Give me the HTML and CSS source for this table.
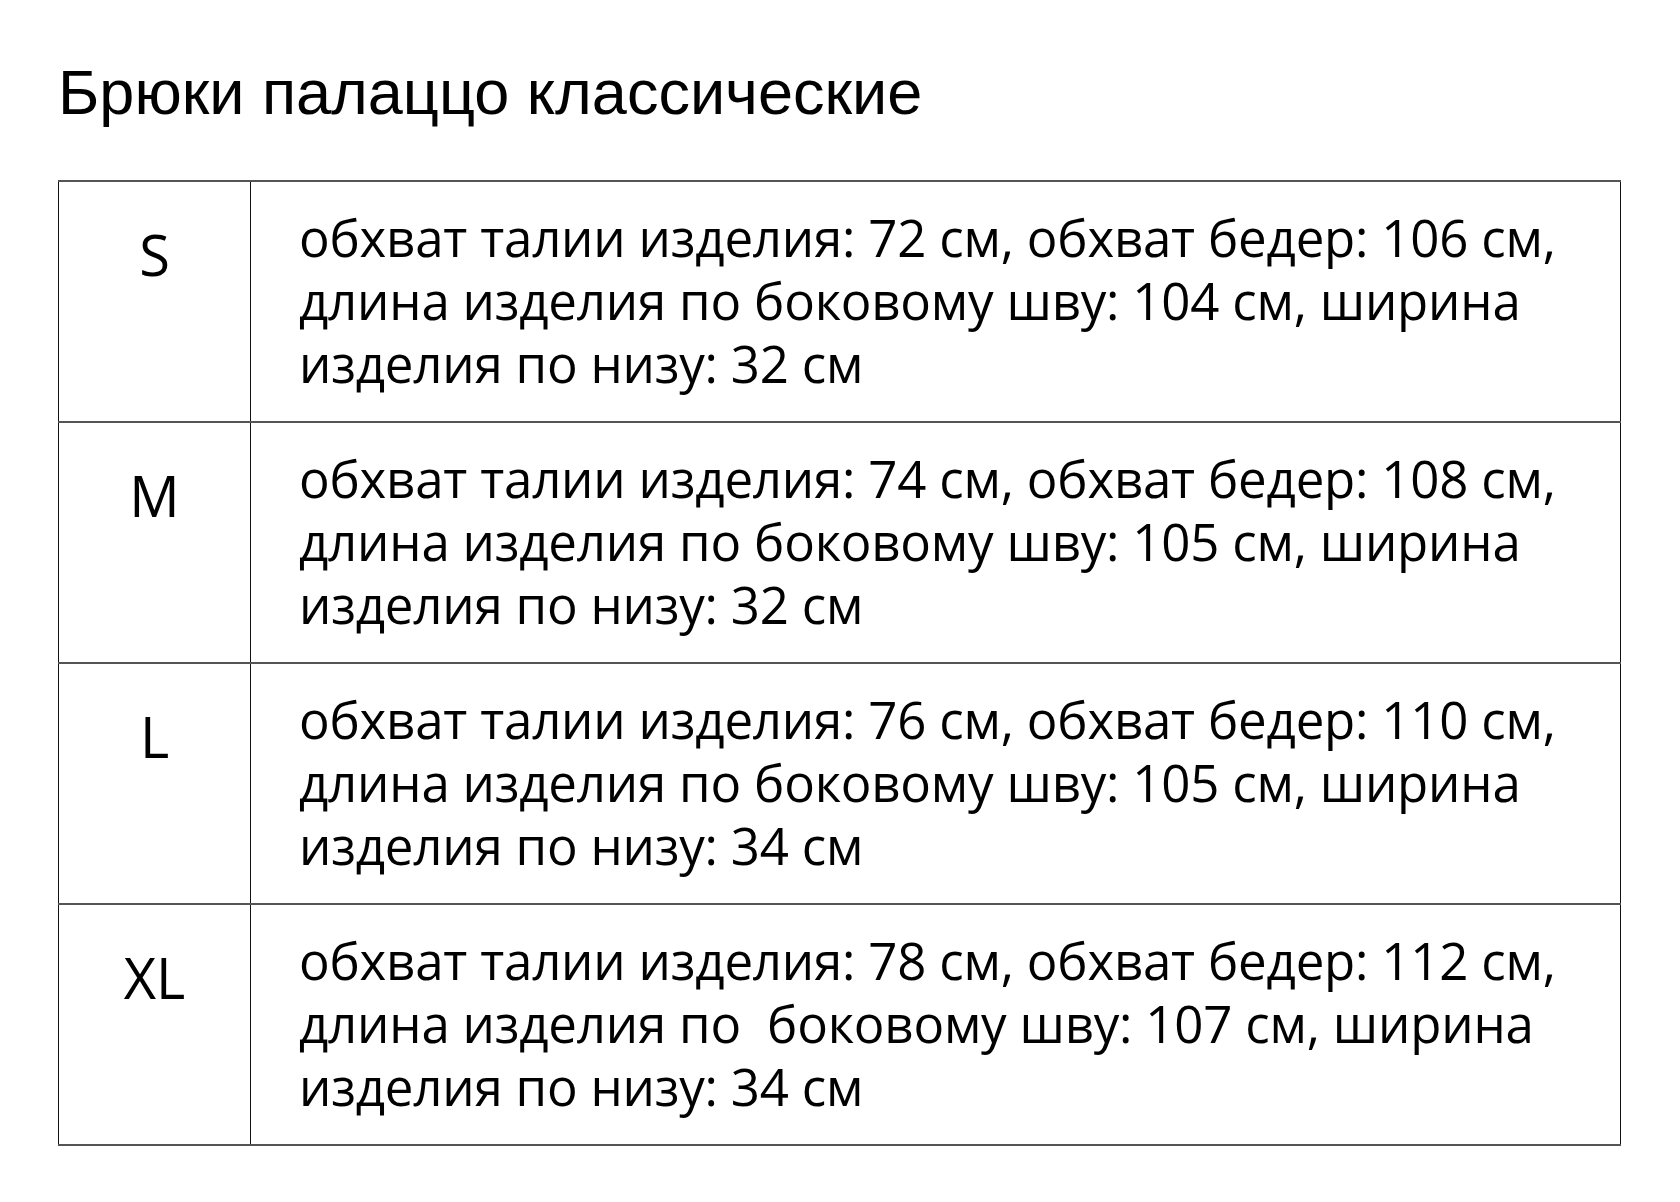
FILE: index.html
```html
<!DOCTYPE html>
<html lang="ru">
<head>
<meta charset="utf-8">
<title>Брюки палаццо классические</title>
<link rel="stylesheet" href="styles.css">
</head>
<body>
<main class="page">
  <h1 class="title">Брюки палаццо классические</h1>
  <table class="sizes">
    <tr>
      <td class="size">S</td>
      <td class="desc">обхват талии изделия: 72 см, обхват бедер: 106 см,<br>длина изделия по боковому шву: 104 см, ширина<br>изделия по низу: 32 см</td>
    </tr>
    <tr>
      <td class="size">M</td>
      <td class="desc">обхват талии изделия: 74 см, обхват бедер: 108 см,<br>длина изделия по боковому шву: 105 см, ширина<br>изделия по низу: 32 см</td>
    </tr>
    <tr>
      <td class="size">L</td>
      <td class="desc">обхват талии изделия: 76 см, обхват бедер: 110 см,<br>длина изделия по боковому шву: 105 см, ширина<br>изделия по низу: 34 см</td>
    </tr>
    <tr>
      <td class="size">XL</td>
      <td class="desc">обхват талии изделия: 78 см, обхват бедер: 112 см,<br>длина изделия по&nbsp; боковому шву: 107 см, ширина<br>изделия по низу: 34 см</td>
    </tr>
  </table>
</main>
</body>
</html>
```

FILE: styles.css
```css
html, body {
  margin: 0;
  padding: 0;
  background: #ffffff;
}

.page {
  padding: 0 59px 0 58px;
  color: #000;
}

.title {
  margin: 0;
  padding-top: 57px;
  height: 180px;
  box-sizing: border-box;
  font-family: "Liberation Sans", Arial, sans-serif;
  font-weight: 400;
  font-size: 63px;
  line-height: 70px;
  letter-spacing: 0;
}

.sizes {
  width: 1563px;
  border-collapse: collapse;
  font-family: "Open Sans", "Noto Sans", sans-serif;
  color: #000;
}

.sizes td {
  border-left: 1px solid #111;
  border-right: 1px solid #111;
  border-top: 2px solid #555;
  border-bottom: 2px solid #555;
  vertical-align: top;
  height: 241px;
  box-sizing: border-box;
  padding: 0;
}

.size {
  width: 192px;
  text-align: center;
  font-size: 56px;
  line-height: 64px;
  padding-top: 40px !important;
}

.desc {
  padding: 24px 0 0 48px !important;
  font-size: 51px;
  line-height: 63px;
  letter-spacing: -0.2px;
  white-space: nowrap;
}
```
